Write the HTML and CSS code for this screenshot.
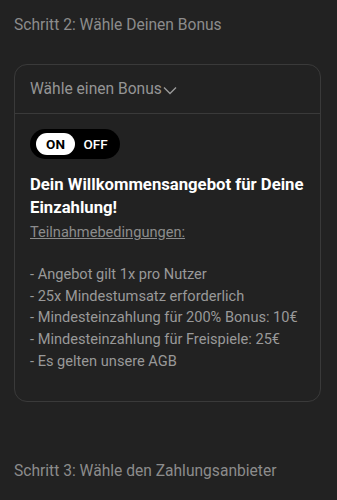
FILE: index.html
```html
<!DOCTYPE html>
<html lang="de">
<head>
<meta charset="utf-8">
<link rel="stylesheet" href="styles.css">
</head>
<body>
<div class="page">
  <h2 class="step">Schritt 2: Wähle Deinen Bonus</h2>
  <div class="card">
    <div class="card-head">
      <span>Wähle einen Bonus</span>
      <svg class="chev" width="14" height="9" viewBox="0 0 14 9"><path d="M1 1.5 L7 7.5 L13 1.5" fill="none" stroke="#9a9a9a" stroke-width="1.4"/></svg>
    </div>
    <div class="card-body">
      <div class="toggle">
        <span class="opt on">ON</span>
        <span class="opt off">OFF</span>
      </div>
      <h3 class="title">Dein Willkommensangebot für Deine Einzahlung!</h3>
      <a class="terms">Teilnahmebedingungen:</a>
      <ul class="list">
        <li>- Angebot gilt 1x pro Nutzer</li>
        <li>- 25x Mindestumsatz erforderlich</li>
        <li>- Mindesteinzahlung für 200% Bonus: 10€</li>
        <li>- Mindesteinzahlung für Freispiele: 25€</li>
        <li>- Es gelten unsere AGB</li>
      </ul>
    </div>
  </div>
  <h2 class="step step3">Schritt 3: Wähle den Zahlungsanbieter</h2>
</div>
</body>
</html>
```
FILE: styles.css
```css
html, body {
  margin: 0;
  padding: 0;
  background: #222222;
}
body {
  font-family: Roboto, "Liberation Sans", sans-serif;
  width: 337px;
  height: 500px;
  overflow: hidden;
}
.page {
  padding: 15px 16px 0 14px;
}
.step {
  margin: 0;
  font-size: 15.6px;
  font-weight: 400;
  line-height: 20px;
  color: #8c8c8c;
}
.card {
  margin-top: 29px;
  border: 1px solid #3a3a3a;
  border-radius: 13px;
}
.card-head {
  height: 48px;
  padding: 0 15px;
  display: flex;
  align-items: center;
  gap: 1px;
  border-bottom: 1px solid #3a3a3a;
  font-size: 15.6px;
  color: #959595;
}
.chev {
  margin-top: 2px;
}
.card-body {
  padding: 15px 15px 28px;
}
.toggle {
  display: inline-flex;
  align-items: center;
  background: #000;
  border-radius: 15px;
  height: 30px;
  width: 90px;
  box-sizing: border-box;
  padding: 0 4px 0 6px;
}
.opt {
  font-size: 13.5px;
  font-weight: 700;
  height: 22px;
  display: flex;
  align-items: center;
  justify-content: center;
}
.on {
  background: #fff;
  color: #000;
  border-radius: 11px;
  width: 39px;
}
.off {
  color: #fff;
  font-weight: 500;
  flex: 1;
}
.title {
  margin: 14px 0 0;
  font-size: 16.7px;
  font-weight: 700;
  line-height: 23px;
  color: #ffffff;
}
.terms {
  display: block;
  margin-top: 3px;
  font-size: 14.6px;
  line-height: 21px;
  color: #8c8c8c;
  text-decoration: underline;
}
.list {
  list-style: none;
  margin: 21px 0 0;
  padding: 0;
  font-size: 14.6px;
  line-height: 21.7px;
  color: #999999;
}
.step3 {
  margin-top: 59px;
}
```
